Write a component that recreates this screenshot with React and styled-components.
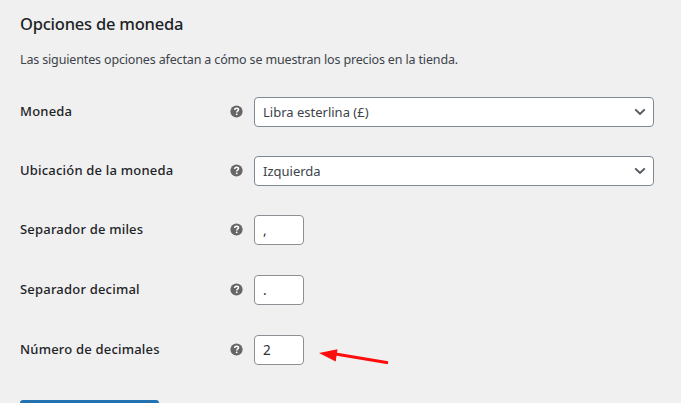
import React from "react";
import styled, { createGlobalStyle } from "styled-components";

const GlobalStyle = createGlobalStyle`
  * { box-sizing: border-box; }
  html, body { margin: 0; height: 403px; overflow: hidden; background: #f0f0f0; }
  body { font-family: "Noto Sans", "Open Sans", sans-serif; font-size: 13px; color: #3c434a; }
`;

const Page = styled.main`
  position: relative;
  width: 681px;
  height: 403px;
  overflow: hidden;
  padding: 12px 27px 0 20px;
  display: flex;
  flex-direction: column;
  align-items: flex-start;
`;

const Title = styled.h2`
  margin: 0;
  height: 24px;
  line-height: 24px;
  font-size: 16.5px;
  font-weight: 500;
  letter-spacing: -0.22px;
  color: #1d2327;
  white-space: nowrap;
`;

const Description = styled.p`
  margin: 13px 0 27px;
  height: 21px;
  line-height: 21px;
  font-size: 12.5px;
  letter-spacing: -0.15px;
  white-space: nowrap;
`;

const Row = styled.div`
  display: grid;
  grid-template-columns: 210px 24px 400px;
  align-items: center;
  height: 30px;
  margin-bottom: ${(p) => p.$gap}px;
`;

const Label = styled.label`
  line-height: 20px;
  margin-top: -2px;
  font-size: 13px;
  font-weight: 500;
  letter-spacing: ${(p) => p.$track || 0}px;
  color: #1d2327;
  white-space: nowrap;
`;

const HelpSvg = styled.svg`
  display: block;
  width: 13px;
  height: 13px;
  margin-bottom: 1px;
`;

const Select = styled.div`
  display: flex;
  align-items: center;
  justify-content: space-between;
  width: 400px;
  height: 30px;
  padding: 0 7px 0 8px;
  border: 1px solid #7e8993;
  border-radius: 4px;
  background: #fff;
  font-size: 13px;
  line-height: 28px;
`;

const Chevron = styled.svg`
  display: block;
  width: 12px;
  height: 8px;
`;

const Input = styled.input`
  width: 50px;
  height: 30px;
  margin: 0;
  padding: 0 8px;
  border: 1px solid #8c8f94;
  border-radius: 4px;
  outline: none;
  background: #fff;
  color: #2c3338;
  font: 13.5px/28px "Noto Sans", "Open Sans", sans-serif;
`;

const Save = styled.button`
  flex: none;
  width: 139px;
  height: 32px;
  margin: 0;
  padding: 0;
  border: 0;
  border-radius: 3px;
  background: #2271b1;
`;

const Arrow = styled.svg`
  position: absolute;
  left: 316px;
  top: 344px;
  width: 76px;
  height: 24px;
`;

function Help() {
  return (
    <HelpSvg viewBox="0 0 13 13" role="img" aria-label="Ayuda">
      <circle cx="6.5" cy="6.5" r="6.1" fill="#666" />
      <path
        d="M4.7 5.1C4.7 3.9 5.4 3.2 6.6 3.2S8.5 3.9 8.5 4.8C8.5 6 6.7 6.1 6.7 7.6"
        fill="none"
        stroke="#fff"
        strokeWidth="1.5"
      />
      <rect x="5.9" y="8.6" width="1.6" height="1.5" fill="#fff" />
    </HelpSvg>
  );
}

function Dropdown({ value }) {
  return (
    <Select role="combobox">
      {value}
      <Chevron viewBox="0 0 12 8">
        <path d="M1.2 1.4 6 6 10.8 1.4" fill="none" stroke="#50575e" strokeWidth="1.9" />
      </Chevron>
    </Select>
  );
}

const rows = [
  { label: "Moneda", track: 0.2, gap: 29, select: "Libra esterlina (£)" },
  { label: "Ubicación de la moneda", track: 0.2, gap: 29, select: "Izquierda" },
  { label: "Separador de miles", track: 0.2, gap: 30, input: "," },
  { label: "Separador decimal", track: 0.2, gap: 30, input: "." },
  { label: "Número de decimales", track: 0.2, gap: 35, input: "2" },
];

export default function App() {
  return (
    <>
      <GlobalStyle />
      <Page>
        <Title>Opciones de moneda</Title>
        <Description>
          Las siguientes opciones afectan a cómo se muestran los precios en la tienda.
        </Description>
        {rows.map((r) => (
          <Row key={r.label} $gap={r.gap}>
            <Label $track={r.track}>{r.label}</Label>
            <Help />
            {r.select ? (
              <Dropdown value={r.select} />
            ) : (
              <Input defaultValue={r.input} aria-label={r.label} />
            )}
          </Row>
        ))}
        <Save aria-label="Guardar los cambios" />
        <Arrow viewBox="316 344 76 24">
          <path d="M334 353.8 388 362.7" stroke="#ff0c0c" strokeWidth="3" fill="none" />
          <path d="M319 353 337.5 349.3 335.7 361.5Z" fill="#ff0c0c" />
        </Arrow>
      </Page>
    </>
  );
}
